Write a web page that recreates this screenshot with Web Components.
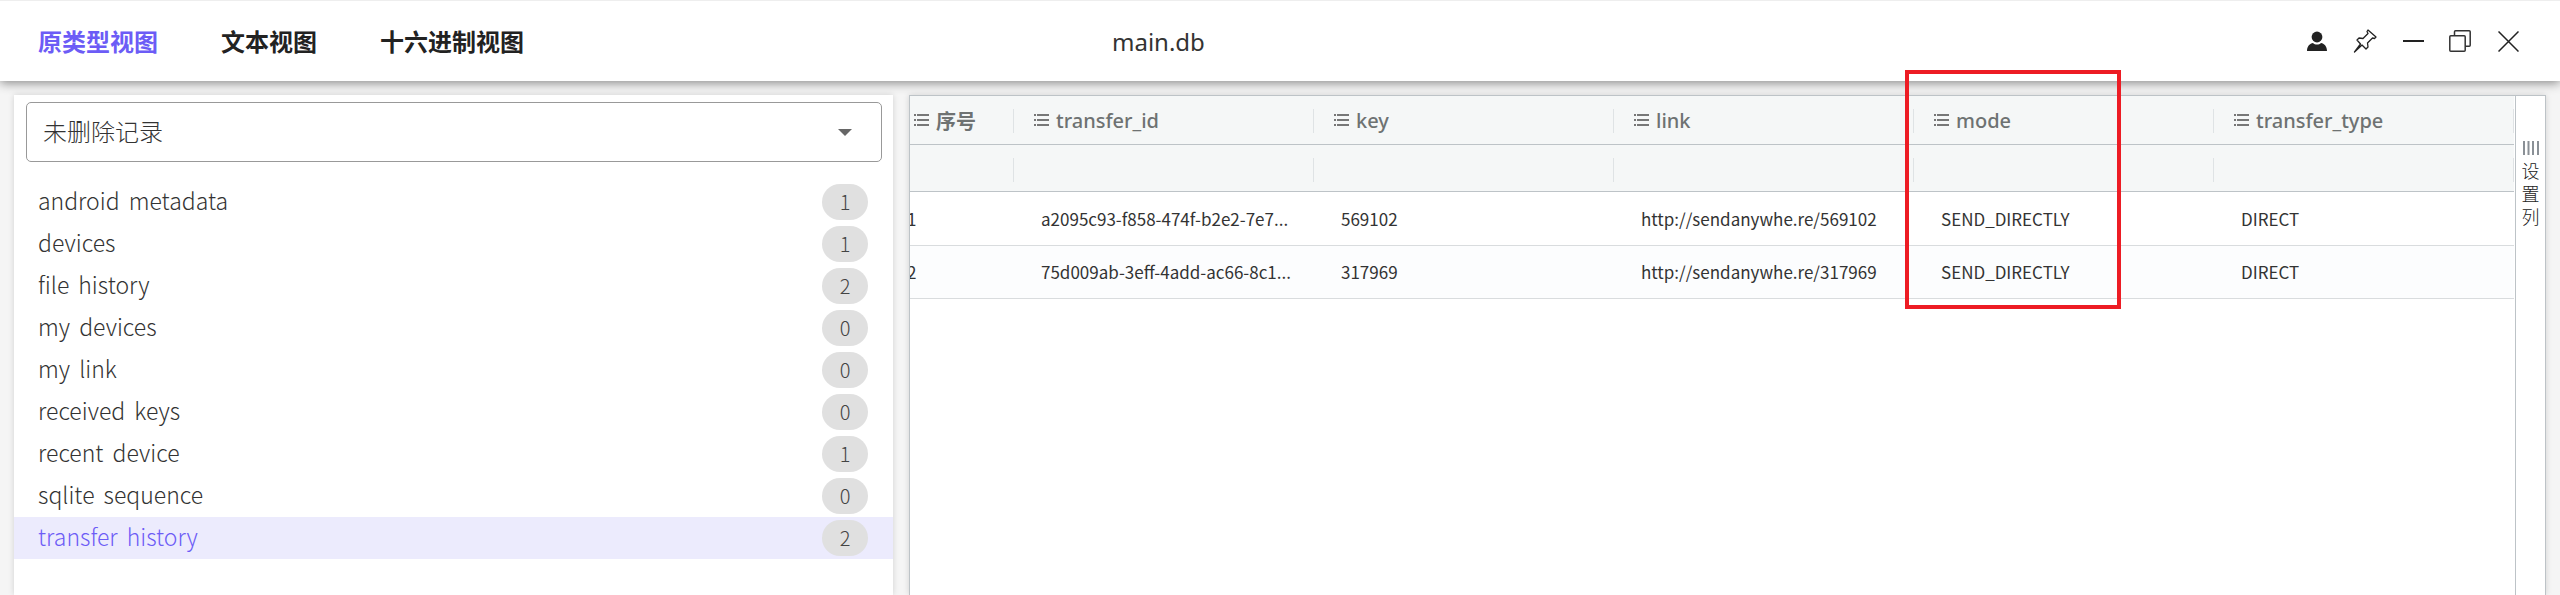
<!DOCTYPE html>
<html lang="zh">
<head>
<meta charset="utf-8">
<title>main.db</title>
<style>
  html, body { margin: 0; height: 100%; background: #f5f5f5; }
  body { font-family: "Noto Sans CJK SC", "Noto Sans", sans-serif; overflow: hidden; }
</style>
</head>
<body>
<viewer-app></viewer-app>

<script>
const menuIcon = `<svg width="15" height="12" viewBox="0 0 15 12" fill="#777"><rect x="0" y="0" width="2" height="2"/><rect x="3" y="0" width="12" height="2"/><rect x="0" y="5" width="2" height="2"/><rect x="3" y="5" width="12" height="2"/><rect x="0" y="10" width="2" height="2"/><rect x="3" y="10" width="12" height="2"/></svg>`;

class ViewerApp extends HTMLElement {
  constructor() {
    super();
    this.attachShadow({ mode: 'open' });
    this.shadowRoot.innerHTML = `
      <style>
        :host { display: flex; flex-direction: column; height: 595px; position: relative; overflow: hidden; }
        main { flex: 1; display: flex; gap: 16px; padding: 14px 14px 0 14px; min-height: 0; }
        .mark { position: absolute; z-index: 3; left: 1905px; top: 70px; width: 208px; height: 231px; border: 4px solid #ed1c24; }
      </style>
      <top-bar></top-bar>
      <main>
        <record-panel>
          <record-item count="1">android metadata</record-item>
          <record-item count="1">devices</record-item>
          <record-item count="2">file history</record-item>
          <record-item count="0">my devices</record-item>
          <record-item count="0">my link</record-item>
          <record-item count="0">received keys</record-item>
          <record-item count="1">recent device</record-item>
          <record-item count="0">sqlite sequence</record-item>
          <record-item count="2" selected>transfer history</record-item>
        </record-panel>
        <data-grid></data-grid>
      </main>
      <div class="mark"></div>
    `;
  }
}

class TopBar extends HTMLElement {
  constructor() {
    super();
    this.attachShadow({ mode: 'open' });
    this.shadowRoot.innerHTML = `
      <style>
        :host { display: grid; grid-template-columns: 1112px auto 1fr; align-items: center; height: 80px; flex: none;
          background: #fff; border-top: 1px solid #eee; box-shadow: 0 2px 10px rgba(0,0,0,.45); position: relative; z-index: 2; }
        nav { display: flex; gap: 63px; padding-left: 38px; font-size: 24px; font-weight: 700; color: #222; line-height: 34px; }
        nav .on { color: #6c5cf6; }
        .title { font-size: 24px; color: #333; font-family: "Noto Sans", sans-serif; }
        .tools { display: flex; justify-self: end; align-items: center; gap: 26px; padding-right: 41px; }
        .restore { margin: 0 1px 0 -1px; }
        svg { display: block; }
      </style>
      <nav><span class="on">原类型视图</span><span>文本视图</span><span>十六进制视图</span></nav>
      <div class="title">main.db</div>
      <div class="tools">
        <svg width="20" height="20" viewBox="0 0 20 20" fill="#222"><circle cx="10" cy="6" r="5.4"/><path d="M0 20c0-5 3-7.500 6-8 1 1 2.500 1.500 4 1.500s3-.5 4-1.500c3 .5 6 3 6 8z"/></svg>
        <svg width="24" height="24" viewBox="0 0 24 24" fill="none" stroke="#222" stroke-width="1.300" stroke-linejoin="round"><path d="M15 1l8 7-1.500 1.500-2-.5-5 5 .5 4-2 2-4-4-7.500 7L7.500 15l-3.500-4 2-2 4 .5 5-5-1-2z"/></svg>
        <svg width="21" height="2" viewBox="0 0 21 2"><rect width="21" height="2" fill="#222"/></svg>
        <svg class="restore" width="22" height="22" viewBox="0 0 22 22" fill="none" stroke="#333" stroke-width="1.500"><rect x=".8" y="5.800" width="15.400" height="15.400" rx="1"/><path d="M5.500 5.800V1.800a1 1 0 0 1 1-1h13.700a1 1 0 0 1 1 1v13.400a1 1 0 0 1-1 1h-4"/></svg>
        <svg width="21" height="21" viewBox="0 0 21 21" fill="none" stroke="#222" stroke-width="1.500"><path d="M.5.500l20 20M20.500.500l-20 20"/></svg>
      </div>
    `;
  }
}

class RecordPanel extends HTMLElement {
  constructor() {
    super();
    this.attachShadow({ mode: 'open' });
    this.shadowRoot.innerHTML = `
      <style>
        :host { display: block; width: 879px; flex: none; background: #fff; box-shadow: 0 0 6px rgba(0,0,0,.15); box-sizing: border-box; padding-top: 7px; }
        .select { display: flex; align-items: center; justify-content: space-between; box-sizing: border-box; height: 60px;
          margin: 0 11px 0 12px; padding: 0 29px 0 16px; border: 1px solid #999; border-radius: 5px; font-size: 24px; color: #333; font-weight: 300; }
        .select span:first-child { padding-bottom: 4px; }
        .caret { width: 0; height: 0; border: 7px solid transparent; border-top: 7px solid #666; border-bottom: 0; }
        .list { padding-top: 19px; }
      </style>
      <div class="select"><span>未删除记录</span><span class="caret"></span></div>
      <div class="list"><slot></slot></div>
    `;
  }
}

class RecordItem extends HTMLElement {
  constructor() {
    super();
    this.attachShadow({ mode: 'open' });
    this.shadowRoot.innerHTML = `
      <style>
        :host { display: flex; align-items: center; justify-content: space-between; height: 42px; padding: 0 25px 0 24px; font-size: 23px; word-spacing: 4px; font-weight: 300; color: #333; }
        :host([selected]) { background: #ecebfd; color: #6c5cf6; }
        .name { padding-bottom: 4px; }
        .count { width: 46px; height: 36px; border-radius: 23px; background: #e0e0e0; color: #444; font-size: 20px; text-align: center; line-height: 36px; }
      </style>
      <span class="name"><slot></slot></span>
      <span class="count">${this.getAttribute('count')}</span>
    `;
  }
}

class DataGrid extends HTMLElement {
  constructor() {
    super();
    this.attachShadow({ mode: 'open' });
    const cols = ['序号', 'transfer_id', 'key', 'link', 'mode', 'transfer_type'];
    const rows = [
      ['1', 'a2095c93-f858-474f-b2e2-7e7...', '569102', 'http://sendanywhe.re/569102', 'SEND_DIRECTLY', 'DIRECT'],
      ['2', '75d009ab-3eff-4add-ac66-8c1...', '317969', 'http://sendanywhe.re/317969', 'SEND_DIRECTLY', 'DIRECT']
    ];
    const head = cols.map(c => `<div class="hcell">${menuIcon}<span>${c}</span></div>`).join('');
    const filter = cols.map(() => `<div class="fcell"></div>`).join('');
    const body = rows.map((r, i) => r.map((c, j) => `<div class="cell ${i % 2 ? 'odd' : ''} ${j ? '' : 'num'}">${c}</div>`).join('')).join('');
    this.shadowRoot.innerHTML = `
      <style>
        :host { display: flex; flex: 1; min-width: 0; background: #fff; border: 1px solid #bdc3c7; border-bottom: 0; box-shadow: 0 0 6px rgba(0,0,0,.15); }
        .view { flex: 1; overflow: hidden; min-width: 0; }
        .table { display: grid; grid-template-columns: 138px repeat(5, 300px); margin-left: -34px; width: max-content; }
        .hcell, .fcell { background: #f5f7f7; position: relative; box-sizing: border-box; border-bottom: 1px solid #bdc3c7; }
        .hcell::after, .fcell::after { content: ""; position: absolute; right: 0; width: 1px; height: 24px; background: #dfe3e5; }
        .hcell::after { top: 13px; }
        .fcell::after { top: 13px; }
        .hcell { height: 49px; display: flex; align-items: center; gap: 7px; padding-left: 20px; font-size: 20px; font-weight: 500; color: #6e7272; font-family: "Noto Sans", "Noto Sans CJK SC", sans-serif; }
        .hcell:first-child { padding-left: 38px; font-weight: 700; }
        .fcell { height: 47px; }
        .cell { height: 54px; padding-left: 27px; font-size: 17px; line-height: 53px; color: #333; border-bottom: 1px solid #d9dcde; box-sizing: border-box; background: #fff; white-space: nowrap; overflow: hidden; }
        .cell.num { padding-left: 31px; }
        .cell.odd { height: 53px; line-height: 52px; background: #fcfdfe; }
      </style>
      <div class="view"><div class="table">${head}${filter}${body}</div></div>
      <column-tab></column-tab>
    `;
  }
}

class ColumnTab extends HTMLElement {
  constructor() {
    super();
    this.attachShadow({ mode: 'open' });
    this.shadowRoot.innerHTML = `
      <style>
        :host { display: block; width: 30px; flex: none; border-left: 1px solid #bdc3c7; background: #fff; box-sizing: border-box; padding-top: 45px; font-size: 18px; line-height: 23px; color: #222; text-align: center; font-weight: 300; }
        svg { display: block; margin: 0 auto 4px 7px; }
      </style>
      <svg width="16" height="14" viewBox="0 0 16 14" fill="#8a9096"><rect width="2" height="14"/><rect x="4.500" width="2" height="14"/><rect x="9" width="2" height="14"/><rect x="14" width="2" height="14"/></svg>
      <div>设</div><div>置</div><div>列</div>
    `;
  }
}

customElements.define('record-item', RecordItem);
customElements.define('record-panel', RecordPanel);
customElements.define('column-tab', ColumnTab);
customElements.define('data-grid', DataGrid);
customElements.define('top-bar', TopBar);
customElements.define('viewer-app', ViewerApp);
</script>
</body>
</html>
